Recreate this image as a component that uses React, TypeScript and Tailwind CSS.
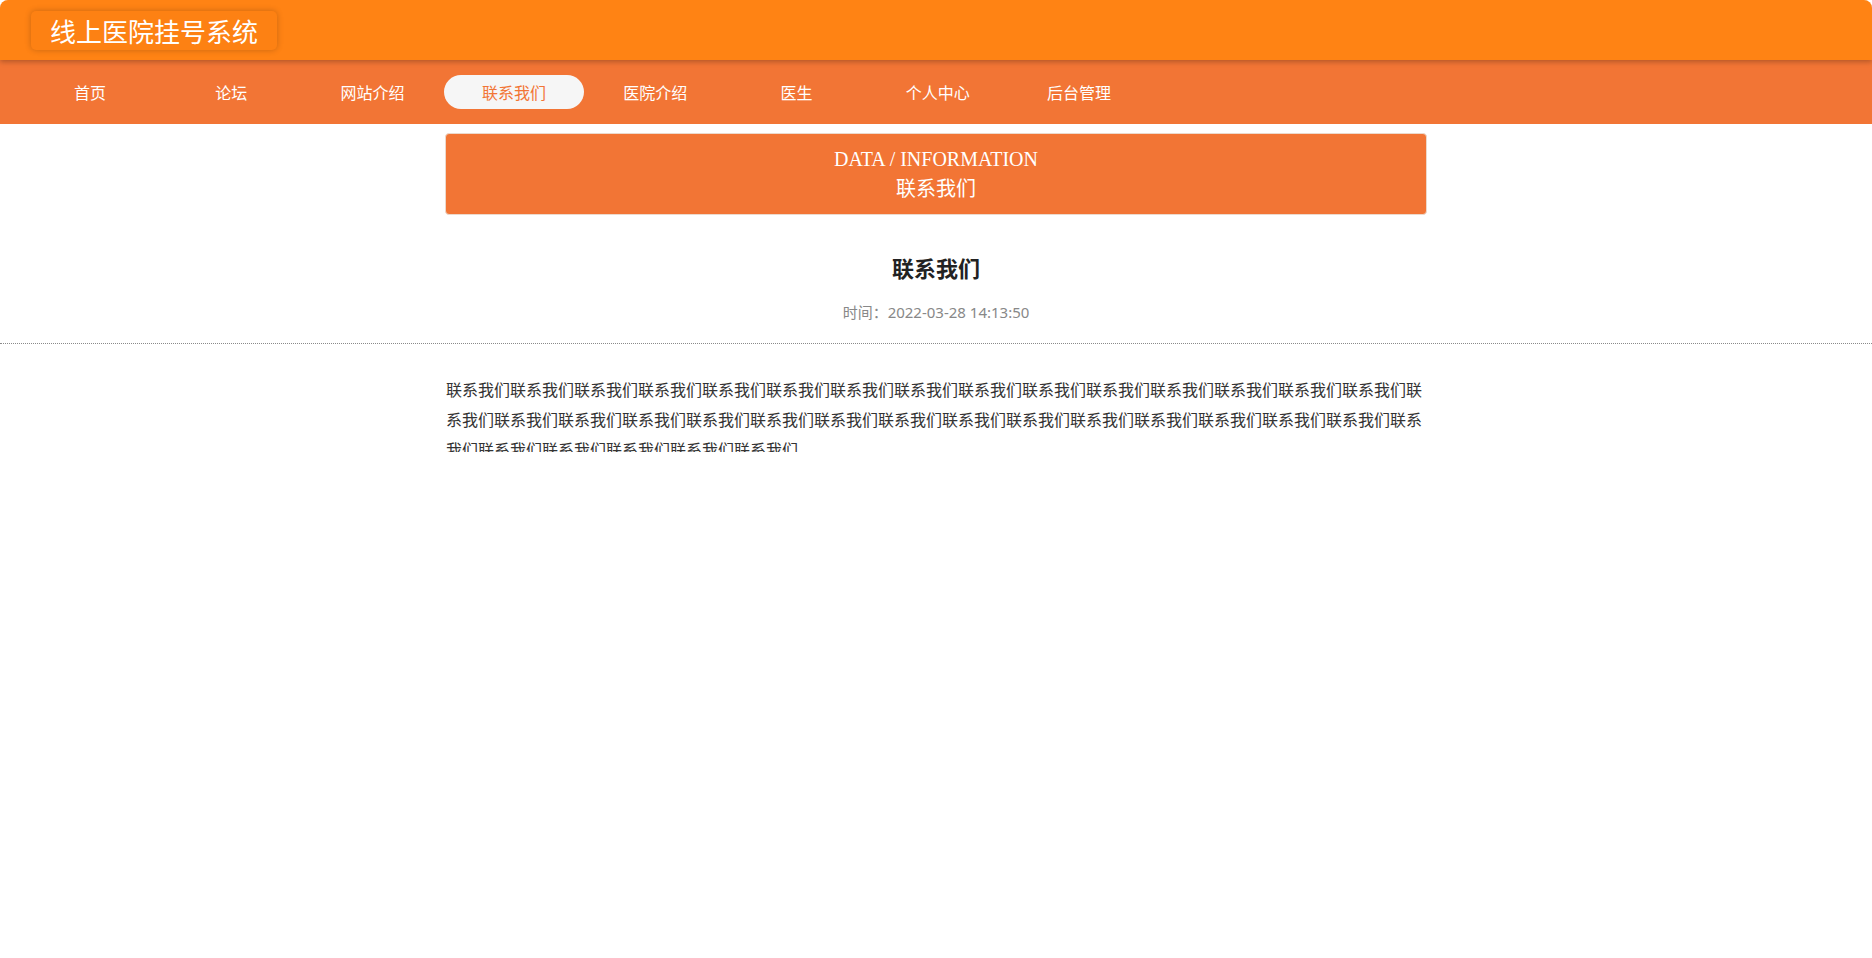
import React from "react";

const navItems = ["首页", "论坛", "网站介绍", "联系我们", "医院介绍", "医生", "个人中心", "后台管理"];
const activeNav = "联系我们";

const sans = "font-['Noto_Sans','Noto_Sans_CJK_SC',sans-serif]";

export default function App() {
  const body = "联系我们".repeat(36);

  return (
    <div className={`w-full h-[958px] bg-white rounded-[8px] overflow-hidden ${sans}`}>
      <header className="relative z-10 h-[60px] bg-[#ff8314] shadow-[0_2px_5px_rgba(0,0,0,0.25)] pt-[11px] pl-[31px]">
        <div className="inline-block h-[39px] px-[19px] rounded-[5px] bg-[#fd8113] shadow-[0_0_6px_rgba(0,0,0,0.22)] text-white text-[26px] leading-[39px] font-['Noto_Sans_CJK_SC',sans-serif]">
          线上医院挂号系统
        </div>
      </header>

      <nav className="h-[64px] bg-[#f27535] flex items-center pl-[20px] gap-[1.3px]">
        {navItems.map((item) => (
          <div
            key={item}
            className={`w-[140px] h-[34px] flex items-center justify-center text-[16px] font-['Noto_Sans_CJK_SC',sans-serif] rounded-full ${
              item === activeNav ? "bg-[#f6f6f6] text-[#f27535]" : "text-white"
            }`}
          >
            {item}
          </div>
        ))}
      </nav>

      <div className="w-[982px] mx-auto mt-[9px] py-[10px] rounded-[4px] border border-[#ecd9cc] bg-[#f27535] text-white text-center font-['Liberation_Serif','Noto_Sans_CJK_SC',serif]">
        <div className="text-[20px] leading-[30px]">DATA / INFORMATION</div>
        <div className="text-[20px] leading-[30px]">联系我们</div>
      </div>

      <div className="pt-[37px] pb-[21px] border-b border-dotted border-[#8a8a8a] text-center">
        <h1 className="text-[22px] leading-[30px] font-bold text-[#222] font-['Noto_Sans_CJK_SC',sans-serif]">联系我们</h1>
        <div className="mt-[20px] text-[15px] leading-[20px] text-[#888]">时间：2022-03-28 14:13:50</div>
      </div>

      {/* the reference clips the third line of the text */}
      <div className="w-[980px] mx-auto mt-[30px] h-[78px] overflow-hidden text-[16px] leading-[30px] text-[#333] break-all font-['Noto_Sans_CJK_SC',serif]">
        {body}
      </div>
    </div>
  );
}
